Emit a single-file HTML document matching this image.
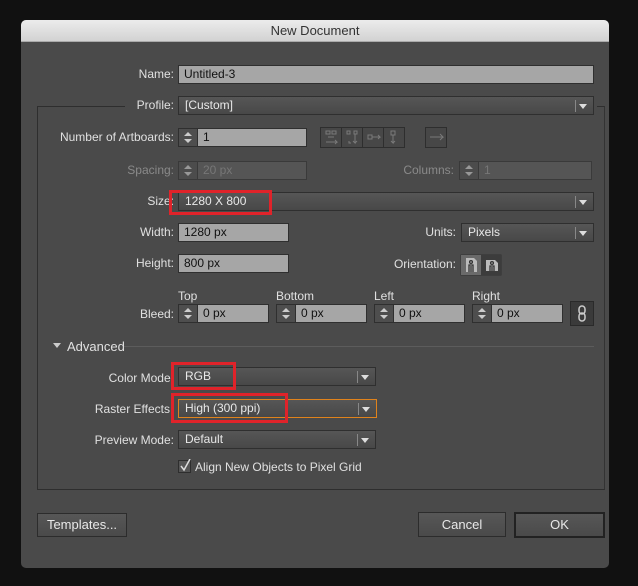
<!DOCTYPE html>
<html><head><style>
*{box-sizing:border-box;margin:0;padding:0}
body{width:638px;height:586px;background:#111;position:relative;overflow:hidden;font-family:"Liberation Sans",sans-serif;font-size:12px;color:#e0e0e0}
.a{position:absolute}
.dlg{left:21px;top:20px;width:588px;height:548px;background:#4a4a4a;border-radius:5px;overflow:hidden}
.title{left:21px;top:20px;width:588px;height:22px;background:linear-gradient(#ececec,#d2d2d2);border-radius:5px 5px 0 0;color:#333;text-align:center;font-size:13px;line-height:22px;border-bottom:1px solid #aaa}
.lbl{text-align:right;line-height:19px;height:19px}
.fld{background:#a6a6a6;border:1px solid #2f2f2f;color:#111;padding-left:5px;line-height:17px;height:19px}
.dis{background:#555;color:#777;border-color:#3a3a3a}
.sel{background:linear-gradient(#565656,#484848);border:1px solid #2f2f2f;color:#e8e8e8;padding-left:6px;line-height:17px;height:19px}
.sel:after{content:"";position:absolute;right:6px;top:7px;border-left:4px solid transparent;border-right:4px solid transparent;border-top:5px solid #ddd}
.sel:before{content:"";position:absolute;right:17px;top:3px;width:1px;height:12px;background:#888}
.spin{background:#4e4e4e;border:1px solid #2f2f2f;width:20px;height:19px}
.spin:before{content:"";position:absolute;left:5px;top:3px;border-left:4px solid transparent;border-right:4px solid transparent;border-bottom:4px solid #ccc}
.spin:after{content:"";position:absolute;left:5px;top:10px;border-left:4px solid transparent;border-right:4px solid transparent;border-top:4px solid #ccc}
.red{border:3px solid #e0232a}
.btn{background:linear-gradient(#575757,#4a4a4a);border:1px solid #2c2c2c;text-align:center;color:#e8e8e8;font-size:13px}
.gl{color:#8a8a8a}
</style></head><body>
<div class="a dlg"></div>
<div class="a title">New Document</div>

<div class="a lbl" style="left:60px;top:65px;width:114px">Name:</div>
<div class="a fld" style="left:178px;top:65px;width:416px">Untitled-3</div>

<div class="a" style="left:37px;top:106px;width:568px;height:384px;border:1px solid #2e2e2e;border-right-color:#333"></div>
<div class="a" style="left:125px;top:100px;width:472px;height:12px;background:#4a4a4a"></div>
<div class="a lbl" style="left:60px;top:96px;width:114px">Profile:</div>
<div class="a sel" style="left:178px;top:96px;width:416px">[Custom]</div>

<div class="a lbl" style="left:40px;top:128px;width:134px">Number of Artboards:</div>
<div class="a spin" style="left:178px;top:128px"></div>
<div class="a fld" style="left:197px;top:128px;width:110px">1</div>
<svg class="a" style="left:320px;top:127px" width="128" height="21" viewBox="0 0 128 21">
<g fill="none" stroke="#2e2e2e"><rect x="0.5" y="0.5" width="84" height="20" fill="#474747"/><line x1="21.5" y1="0" x2="21.5" y2="21"/><line x1="42.5" y1="0" x2="42.5" y2="21"/><line x1="63.5" y1="0" x2="63.5" y2="21"/><rect x="105.5" y="0.5" width="21" height="20" fill="#474747"/></g>
<g fill="none" stroke="#7a7a7a"><rect x="6" y="4" width="4" height="3"/><rect x="12" y="4" width="4" height="3"/><path d="M8 10h6M6 15h4M10 15h7l-2-2M15 17l2-2"/>
<rect x="27" y="4" width="3" height="3"/><rect x="34" y="4" width="3" height="3"/><path d="M35 7v9l-2-2M35 16l2-2M29 14v2h2"/>
<rect x="48" y="8" width="4" height="4"/><path d="M52 10h8l-2-2M60 10l-2 2"/>
<rect x="71" y="4" width="4" height="4"/><path d="M73 8v8l-2-2M73 16l2-2"/>
<path d="M110 10h13l-3-3M123 10l-3 3"/></g></svg>

<div class="a lbl gl" style="left:60px;top:161px;width:114px">Spacing:</div>
<div class="a spin dis" style="left:178px;top:161px;opacity:.6"></div>
<div class="a fld dis" style="left:197px;top:161px;width:110px">20 px</div>
<div class="a lbl gl" style="left:360px;top:161px;width:94px">Columns:</div>
<div class="a spin dis" style="left:459px;top:161px;opacity:.6"></div>
<div class="a fld dis" style="left:478px;top:161px;width:114px">1</div>

<div class="a lbl" style="left:60px;top:192px;width:114px">Size:</div>
<div class="a sel" style="left:178px;top:192px;width:416px">1280 X 800</div>
<div class="a red" style="left:169px;top:190px;width:103px;height:25px"></div>

<div class="a lbl" style="left:60px;top:223px;width:114px">Width:</div>
<div class="a fld" style="left:178px;top:223px;width:111px">1280 px</div>
<div class="a lbl" style="left:380px;top:223px;width:76px">Units:</div>
<div class="a sel" style="left:461px;top:223px;width:133px">Pixels</div>

<div class="a lbl" style="left:60px;top:254px;width:114px">Height:</div>
<div class="a fld" style="left:178px;top:254px;width:111px">800 px</div>
<div class="a lbl" style="left:360px;top:255px;width:96px">Orientation:</div>
<svg class="a" style="left:460px;top:254px" width="42" height="22" viewBox="0 0 42 22">
<rect x="0.5" y="0.5" width="41" height="21" fill="#333"/><rect x="1" y="1" width="20" height="20" fill="#6a6a6a"/><rect x="21" y="1" width="20" height="20" fill="#3c3c3c"/>
<path d="M6 4h8l3 3v11H6z" fill="#bbb"/><path d="M26 6h9l3 3v8H26z" fill="#bbb"/>
<g fill="none" stroke="#333" stroke-width="1.3"><circle cx="11" cy="8" r="1.4"/><path d="M9 18v-7h4v7M11 12v6"/><circle cx="32" cy="9" r="1.4"/><path d="M30 17v-5h4v5M32 13v4"/></g></svg>

<div class="a" style="left:178px;top:289px">Top</div>
<div class="a" style="left:276px;top:289px">Bottom</div>
<div class="a" style="left:374px;top:289px">Left</div>
<div class="a" style="left:472px;top:289px">Right</div>
<div class="a lbl" style="left:60px;top:305px;width:114px">Bleed:</div>
<div class="a spin" style="left:178px;top:304px"></div><div class="a fld" style="left:197px;top:304px;width:72px">0 px</div>
<div class="a spin" style="left:276px;top:304px"></div><div class="a fld" style="left:295px;top:304px;width:72px">0 px</div>
<div class="a spin" style="left:374px;top:304px"></div><div class="a fld" style="left:393px;top:304px;width:72px">0 px</div>
<div class="a spin" style="left:472px;top:304px"></div><div class="a fld" style="left:491px;top:304px;width:72px">0 px</div>
<svg class="a" style="left:570px;top:301px" width="24" height="25" viewBox="0 0 24 25"><rect x="0.5" y="0.5" width="23" height="24" fill="#3a3a3a" stroke="#2a2a2a"/><g fill="none" stroke="#ccc" stroke-width="1.5"><rect x="9" y="5" width="6" height="8" rx="3"/><rect x="9" y="12" width="6" height="8" rx="3"/></g></svg>

<div class="a" style="left:53px;top:343px;border-left:4px solid transparent;border-right:4px solid transparent;border-top:5px solid #ccc"></div>
<div class="a" style="left:67px;top:339px;font-size:13px">Advanced</div>
<div class="a" style="left:124px;top:346px;width:470px;height:1px;background:#5c5c5c"></div>

<div class="a lbl" style="left:60px;top:369px;width:114px">Color Mode:</div>
<div class="a sel" style="left:178px;top:367px;width:198px">RGB</div>
<div class="a red" style="left:171px;top:362px;width:65px;height:28px"></div>

<div class="a lbl" style="left:60px;top:400px;width:110px">Raster Effects</div>
<div class="a sel" style="left:178px;top:399px;width:199px;border-color:#e0831c">High (300 ppi)</div>
<div class="a red" style="left:171px;top:393px;width:117px;height:30px"></div>

<div class="a lbl" style="left:60px;top:431px;width:114px">Preview Mode:</div>
<div class="a sel" style="left:178px;top:430px;width:198px">Default</div>

<svg class="a" style="left:178px;top:459px" width="14" height="15" viewBox="0 0 14 15"><rect x="0.5" y="1.5" width="12" height="12" fill="#555" stroke="#2e2e2e"/><path d="M3 7l3 4 6-11" fill="none" stroke="#ddd" stroke-width="1.5"/></svg>
<div class="a" style="left:195px;top:460px">Align New Objects to Pixel Grid</div>

<div class="a btn" style="left:37px;top:513px;width:90px;height:24px;line-height:22px">Templates...</div>
<div class="a btn" style="left:418px;top:512px;width:88px;height:25px;line-height:23px">Cancel</div>
<div class="a btn" style="left:514px;top:512px;width:91px;height:26px;line-height:22px;border:2px solid #222">OK</div>
</body></html>
